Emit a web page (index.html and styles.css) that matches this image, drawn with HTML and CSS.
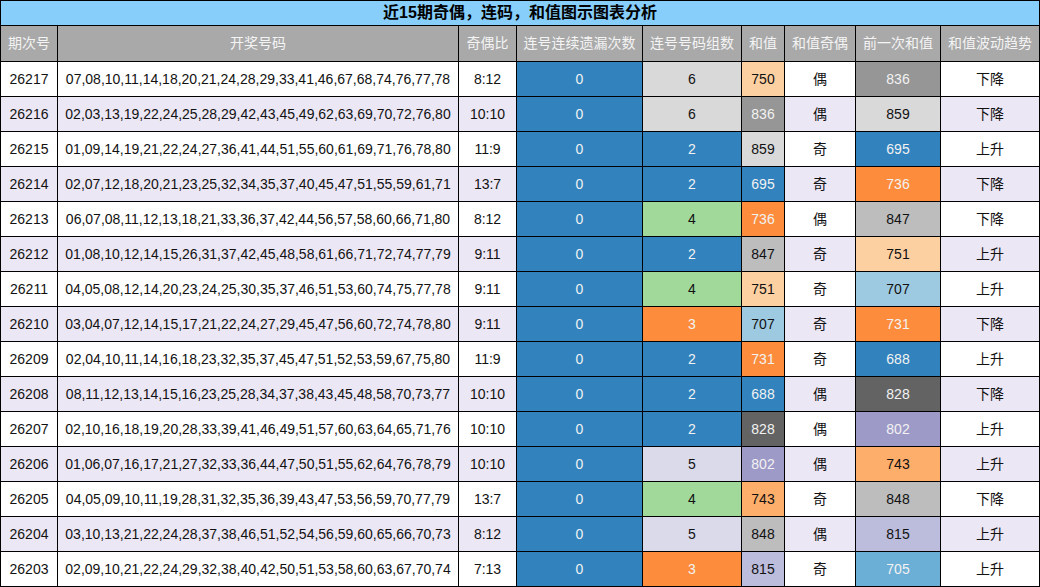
FILE: index.html
```html
<!DOCTYPE html>
<html lang="zh">
<head>
<meta charset="utf-8">
<title>近15期奇偶，连码，和值图示图表分析</title>
<link rel="stylesheet" href="styles.css">
</head>
<body>
<table class="chart">
  <colgroup>
    <col class="c-issue"><col class="c-nums"><col class="c-ratio"><col class="c-miss"><col class="c-groups"><col class="c-sum"><col class="c-parity"><col class="c-prev"><col class="c-trend">
  </colgroup>
  <thead>
    <tr class="title-row"><th colspan="9">近15期奇偶，连码，和值图示图表分析</th></tr>
    <tr class="head-row">
      <th>期次号</th><th>开奖号码</th><th>奇偶比</th><th>连号连续遗漏次数</th><th>连号号码组数</th><th>和值</th><th>和值奇偶</th><th>前一次和值</th><th>和值波动趋势</th>
    </tr>
  </thead>
  <tbody>
    <tr><td>26217</td><td>07,08,10,11,14,18,20,21,24,28,29,33,41,46,67,68,74,76,77,78</td><td>8:12</td><td class="b1">0</td><td class="g20">6</td><td class="o4">750</td><td>偶</td><td class="g18">836</td><td>下降</td></tr>
    <tr class="alt"><td>26216</td><td>02,03,13,19,22,24,25,28,29,42,43,45,49,62,63,69,70,72,76,80</td><td>10:10</td><td class="b1">0</td><td class="g20">6</td><td class="g18">836</td><td>偶</td><td class="g20">859</td><td>下降</td></tr>
    <tr><td>26215</td><td>01,09,14,19,21,22,24,27,36,41,44,51,55,60,61,69,71,76,78,80</td><td>11:9</td><td class="b1">0</td><td class="b1">2</td><td class="g20">859</td><td>奇</td><td class="b1">695</td><td>上升</td></tr>
    <tr class="alt"><td>26214</td><td>02,07,12,18,20,21,23,25,32,34,35,37,40,45,47,51,55,59,61,71</td><td>13:7</td><td class="b1">0</td><td class="b1">2</td><td class="b1">695</td><td>奇</td><td class="o2">736</td><td>下降</td></tr>
    <tr><td>26213</td><td>06,07,08,11,12,13,18,21,33,36,37,42,44,56,57,58,60,66,71,80</td><td>8:12</td><td class="b1">0</td><td class="gr3">4</td><td class="o2">736</td><td>偶</td><td class="g19">847</td><td>下降</td></tr>
    <tr class="alt"><td>26212</td><td>01,08,10,12,14,15,26,31,37,42,45,48,58,61,66,71,72,74,77,79</td><td>9:11</td><td class="b1">0</td><td class="b1">2</td><td class="g19">847</td><td>奇</td><td class="o4">751</td><td>上升</td></tr>
    <tr><td>26211</td><td>04,05,08,12,14,20,23,24,25,30,35,37,46,51,53,60,74,75,77,78</td><td>9:11</td><td class="b1">0</td><td class="gr3">4</td><td class="o4">751</td><td>奇</td><td class="b3">707</td><td>上升</td></tr>
    <tr class="alt"><td>26210</td><td>03,04,07,12,14,15,17,21,22,24,27,29,45,47,56,60,72,74,78,80</td><td>9:11</td><td class="b1">0</td><td class="o2">3</td><td class="b3">707</td><td>奇</td><td class="o2">731</td><td>下降</td></tr>
    <tr><td>26209</td><td>02,04,10,11,14,16,18,23,32,35,37,45,47,51,52,53,59,67,75,80</td><td>11:9</td><td class="b1">0</td><td class="b1">2</td><td class="o2">731</td><td>奇</td><td class="b1">688</td><td>上升</td></tr>
    <tr class="alt"><td>26208</td><td>08,11,12,13,14,15,16,23,25,28,34,37,38,43,45,48,58,70,73,77</td><td>10:10</td><td class="b1">0</td><td class="b1">2</td><td class="b1">688</td><td>偶</td><td class="g17">828</td><td>下降</td></tr>
    <tr><td>26207</td><td>02,10,16,18,19,20,28,33,39,41,46,49,51,57,60,63,64,65,71,76</td><td>10:10</td><td class="b1">0</td><td class="b1">2</td><td class="g17">828</td><td>偶</td><td class="p2">802</td><td>上升</td></tr>
    <tr class="alt"><td>26206</td><td>01,06,07,16,17,21,27,32,33,36,44,47,50,51,55,62,64,76,78,79</td><td>10:10</td><td class="b1">0</td><td class="p4">5</td><td class="p2">802</td><td>偶</td><td class="o3">743</td><td>上升</td></tr>
    <tr><td>26205</td><td>04,05,09,10,11,19,28,31,32,35,36,39,43,47,53,56,59,70,77,79</td><td>13:7</td><td class="b1">0</td><td class="gr3">4</td><td class="o3">743</td><td>奇</td><td class="g19">848</td><td>下降</td></tr>
    <tr class="alt"><td>26204</td><td>03,10,13,21,22,24,28,37,38,46,51,52,54,56,59,60,65,66,70,73</td><td>8:12</td><td class="b1">0</td><td class="p4">5</td><td class="g19">848</td><td>偶</td><td class="p3">815</td><td>上升</td></tr>
    <tr><td>26203</td><td>02,09,10,21,22,24,29,32,38,40,42,50,51,53,58,60,63,67,70,74</td><td>7:13</td><td class="b1">0</td><td class="o2">3</td><td class="p3">815</td><td>奇</td><td class="b2">705</td><td>上升</td></tr>
  </tbody>
</table>
</body>
</html>
```
FILE: styles.css
```css
html, body {
  margin: 0;
  padding: 0;
  background: #ffffff;
}

.chart {
  border-collapse: collapse;
  table-layout: fixed;
  width: 1040px;
  font-family: "Liberation Sans", "Noto Sans CJK SC", sans-serif;
  font-size: 14px;
  color: #111;
}

.c-issue { width: 57px; }
.c-nums { width: 401px; }
.c-ratio { width: 58px; }
.c-miss { width: 126px; }
.c-groups { width: 99px; }
.c-sum { width: 43px; }
.c-parity { width: 71px; }
.c-prev { width: 85px; }
.c-trend { width: 99px; }

.chart th,
.chart td {
  border: 1px solid #000;
  padding: 0;
  text-align: center;
  white-space: nowrap;
  overflow: hidden;
}

.title-row th {
  background: #87cefa;
  font-size: 16px;
  font-weight: bold;
  line-height: 24px;
  color: #000;
}

.head-row th {
  background: #a9a9a9;
  color: #f4f4f4;
  font-weight: normal;
  line-height: 35px;
}

.chart td {
  line-height: 34px;
  background: #ffffff;
}

.chart tr.alt td {
  background: #ece7f5;
}

.chart tr td.b1 { background: #3182bd; color: #f2f2f2; }
.chart tr td.b2 { background: #6baed6; color: #f2f2f2; }
.chart tr td.b3 { background: #9ecae1; }
.chart tr td.o2 { background: #fd8d3c; color: #f2f2f2; }
.chart tr td.o3 { background: #fdae6b; }
.chart tr td.o4 { background: #fdd0a2; }
.chart tr td.gr3 { background: #a1d99b; }
.chart tr td.p2 { background: #9e9ac8; color: #f2f2f2; }
.chart tr td.p3 { background: #bcbddc; }
.chart tr td.p4 { background: #dadaeb; }
.chart tr td.g17 { background: #636363; color: #f2f2f2; }
.chart tr td.g18 { background: #969696; color: #f2f2f2; }
.chart tr td.g19 { background: #bdbdbd; }
.chart tr td.g20 { background: #d9d9d9; }
```
